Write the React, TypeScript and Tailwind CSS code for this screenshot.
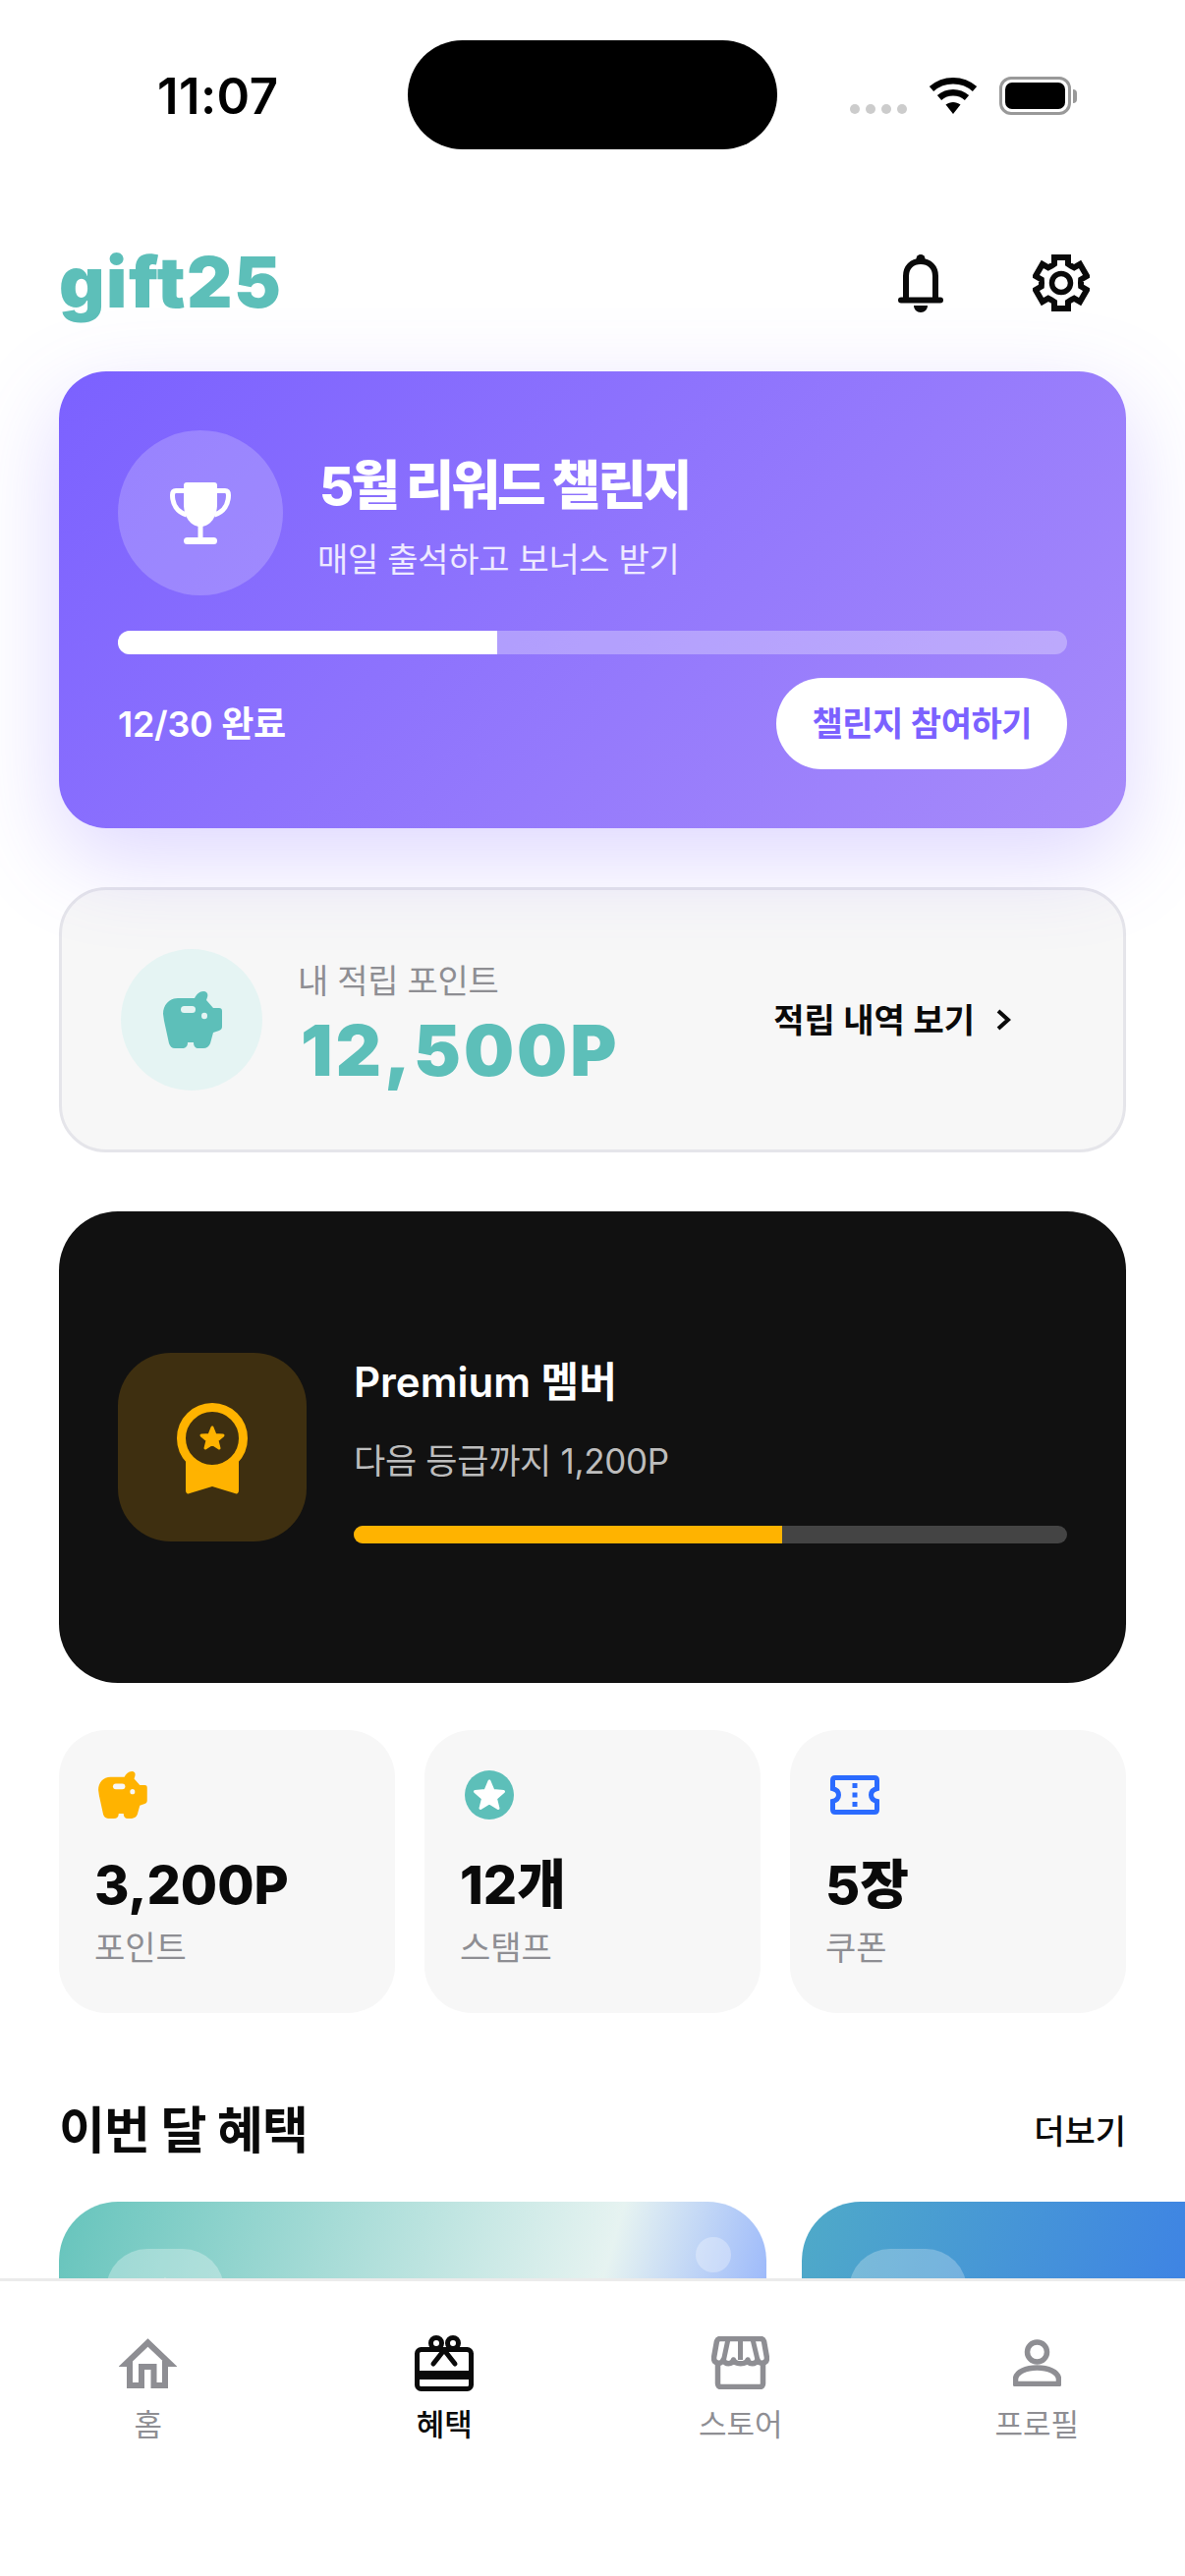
import React from 'react'

const font = { fontFamily: '"Inter", "Noto Sans CJK KR", sans-serif' }

// 6 tooth gear outline, drawn as one polygon
const gearPoints = Array.from({ length: 6 }, (_, i) => {
  const a = i * 60 - 90
  const pt = (r: number, d: number) => {
    const t = ((a + d) * Math.PI) / 180
    return `${(29 + r * Math.cos(t)).toFixed(2)},${(30 + r * Math.sin(t)).toFixed(2)}`
  }
  return [pt(20, -30), pt(20.5, -20), pt(27, -15), pt(27, 15), pt(20.5, 20)].join(' ')
}).join(' ')

const Piggy = ({ color, hole, className }: { color: string; hole: string; className: string }) => (
  <svg viewBox="0 0 61 58" className={className}>
    <path
      fill={color}
      d="M1 23C1 14 7 7 16 7H33C35 3 38 0 42 0C46 0 47 3 46 6L45 9L52 17H58C60 17 61 18 61 20V36C61 38 60 39 58 40L52 42L49 53C48 56 45 58 42 58H37C34 58 32 56 32 52H26C26 56 24 58 20 58H13C10 58 8 56 7 53L2 30Z"
    />
    <rect x="19" y="15" width="15" height="7" rx="3.5" fill={hole} />
    <ellipse cx="43" cy="25" rx="3" ry="3.2" fill={hole} />
  </svg>
)

const Bell = () => (
  <svg viewBox="0 0 46 59" className="w-[46px] h-[59px]">
    <circle cx="23" cy="4.5" r="4.5" fill="#0a0a0a" />
    <path d="M8 44V22C8 13 14 7 23 7C32 7 38 13 38 22V44" fill="none" stroke="#0a0a0a" strokeWidth="6" />
    <path d="M3 46.5H43" stroke="#0a0a0a" strokeWidth="6" strokeLinecap="round" />
    <path d="M16 52H30C30 56 27 59 23 59C19 59 16 56 16 52Z" fill="#0a0a0a" />
  </svg>
)

const Gear = () => (
  <svg viewBox="0 0 58 60" className="w-[58px] h-[60px]">
    <polygon points={gearPoints} fill="none" stroke="#0a0a0a" strokeWidth="6" strokeLinejoin="miter" />
    <circle cx="29" cy="30" r="9.5" fill="none" stroke="#0a0a0a" strokeWidth="5.5" />
  </svg>
)

const Trophy = () => (
  <svg viewBox="0 0 62 63" className="w-[62px] h-[63px]">
    <path d="M14 8.5H6C3.5 8.5 2.5 10 2.5 13C2.5 22 7 30 17 33" fill="none" stroke="#fff" strokeWidth="5" />
    <path d="M48 8.5H56C58.5 8.5 59.5 10 59.5 13C59.5 22 55 30 45 33" fill="none" stroke="#fff" strokeWidth="5" />
    <path fill="#fff" d="M17 0H45C47 0 48 1 48 3V22C48 35 41 45 31 45C21 45 14 35 14 22V3C14 1 15 0 17 0Z" />
    <rect x="28.5" y="44" width="5" height="14" fill="#fff" />
    <rect x="14" y="56" width="34" height="7" rx="3.5" fill="#fff" />
  </svg>
)

const Medal = () => (
  <svg viewBox="0 0 72 93" className="w-[72px] h-[93px] mt-[3px]">
    <path fill="#FFB300" d="M9 56H63V89C63 92 61 93 59 92L36 85L13 92C11 93 9 92 9 89Z" />
    <circle cx="36" cy="36" r="31.5" fill="#3E2F10" stroke="#FFB300" strokeWidth="9" />
    <path
      fill="#FFB300"
      stroke="#FFB300"
      strokeWidth="3"
      strokeLinejoin="round"
      d="M36 25L39 32.5L47 33L41 38L43 46L36 41.5L29 46L31 38L25 33L33 32.5Z"
    />
  </svg>
)

const StarCircle = () => (
  <svg viewBox="0 0 50 50" className="w-[50px] h-[50px]">
    <circle cx="25" cy="25" r="25" fill="#5DBFB9" />
    <path
      fill="#fff"
      stroke="#fff"
      strokeWidth="3"
      strokeLinejoin="round"
      d="M25 11L29 20.5L39.5 21.5L31.5 28.5L34 38.5L25 33L16 38.5L18.5 28.5L10.5 21.5L21 20.5Z"
    />
  </svg>
)

const Ticket = () => (
  <svg viewBox="0 0 50 40" className="w-[50px] h-[40px]">
    <path
      d="M5 2.5H45C46.5 2.5 47.5 3.5 47.5 5V13.5C44 14.500 41.500 17 41.500 20C41.500 23 44 25.500 47.5 26.500V35C47.5 36.5 46.5 37.5 45 37.5H5C3.500 37.5 2.5 36.5 2.5 35V26.500C6 25.500 8.500 23 8.500 20C8.500 17 6 14.500 2.5 13.500V5C2.5 3.5 3.5 2.5 5 2.5Z"
      fill="none"
      stroke="#2B6BFF"
      strokeWidth="5"
    />
    <rect x="22.500" y="8" width="5" height="5" fill="#2B6BFF" />
    <rect x="22.500" y="17.500" width="5" height="5" fill="#2B6BFF" />
    <rect x="22.500" y="27" width="5" height="5" fill="#2B6BFF" />
  </svg>
)

const HomeIcon = () => (
  <svg viewBox="0 0 59 51" className="w-[59px] h-[51px]">
    <path
      d="M23 48V29H35.500V48H47V26H52L29.500 4.500L7 26H11V48Z"
      fill="none"
      stroke="#8E8E93"
      strokeWidth="6"
    />
  </svg>
)

const GiftIcon = () => (
  <svg viewBox="0 0 60 57" className="w-[60px] h-[57px]">
    <rect x="2.500" y="14.500" width="55" height="40" rx="4" fill="none" stroke="#0a0a0a" strokeWidth="5" />
    <rect x="2" y="36" width="56" height="9" fill="#0a0a0a" />
    <circle cx="22" cy="8" r="5.500" fill="none" stroke="#0a0a0a" strokeWidth="5" />
    <circle cx="39" cy="8" r="5.500" fill="none" stroke="#0a0a0a" strokeWidth="5" />
    <path d="M30 15L19 29M30 15L41 29" stroke="#0a0a0a" strokeWidth="5" strokeLinecap="round" />
  </svg>
)

const StoreIcon = () => (
  <svg viewBox="0 0 59 54" className="w-[59px] h-[54px]">
    <path
      d="M9 2.500H50C52 2.500 53 3.500 53.500 5L56.500 22C56.500 28 48.500 29 47 24C45 29 38 29 37 24C35.500 29 24 29 22.500 24C21 29 14 29 12 24C10.500 29 2.500 28 2.500 22L5.500 5C6 3.500 7 2.500 9 2.500Z"
      fill="none"
      stroke="#8E8E93"
      strokeWidth="5.500"
      strokeLinejoin="round"
    />
    <path d="M17 3L12.500 24M29.500 3V24M42 3L47 24" stroke="#8E8E93" strokeWidth="5" fill="none" />
    <path d="M6.500 27V48C6.500 50 7.500 51.500 9.500 51.500H49.500C51.500 51.500 52.500 50 52.500 48V27" fill="none" stroke="#8E8E93" strokeWidth="5.500" />
  </svg>
)

const PersonIcon = () => (
  <svg viewBox="0 0 49 48" className="w-[49px] h-[48px]">
    <circle cx="24.500" cy="13" r="10" fill="none" stroke="#8E8E93" strokeWidth="5.500" />
    <path
      d="M2.500 45.500V41C2.500 33 14 29 24.500 29C35 29 46.500 33 46.500 41V45.500Z"
      fill="none"
      stroke="#8E8E93"
      strokeWidth="5.500"
      strokeLinejoin="round"
    />
  </svg>
)

const StatCard = ({ icon, value, label, pad }: { icon: React.ReactNode; value: string; label: string; pad: string }) => (
  <div className="flex-1 h-[288px] rounded-[48px] bg-[#F7F7F7] px-[36px]">
    <div className={`h-[60px] mt-[36px] flex items-center ${pad}`}>{icon}</div>
    <div className="mt-[26px] text-[54px] leading-[72px] font-extrabold text-[#0a0a0a]">{value}</div>
    <div className="mt-[4px] text-[34px] leading-[48px] text-[#8E8E93]">{label}</div>
  </div>
)

const NavItem = ({ icon, label, active }: { icon: React.ReactNode; label: string; active?: boolean }) => (
  <div className="flex-1 flex flex-col items-center">
    <div className="h-[60px] flex items-center justify-center">{icon}</div>
    <div className={`mt-[9px] text-[31px] leading-[48px] ${active ? 'text-[#0a0a0a] font-medium' : 'text-[#8E8E93]'}`}>{label}</div>
  </div>
)

export default function App() {
  return (
    <div style={font} className="w-[1206px] h-[2622px] bg-white flex flex-col overflow-hidden">
      {/* status bar */}
      <div className="h-[162px] shrink-0 grid grid-cols-[1fr_376px_1fr] items-start pt-[41px]">
        <div className="pl-[160px] mt-[27px] text-[51px] leading-[60px] font-semibold tracking-[0.4px] text-black">11:07</div>
        <div className="h-[111px] rounded-full bg-black"></div>
        <div className="flex items-end pl-[74px] mt-[37px] h-[39px]">
          <div className="flex gap-[6px] mb-[1px] mr-[22px]">
            <div className="w-[10px] h-[10px] rounded-full bg-[#ccc]"></div>
            <div className="w-[10px] h-[10px] rounded-full bg-[#ccc]"></div>
            <div className="w-[10px] h-[10px] rounded-full bg-[#ccc]"></div>
            <div className="w-[10px] h-[10px] rounded-full bg-[#ccc]"></div>
          </div>
          <svg viewBox="0 0 50 38" className="w-[50px] h-[38px] mr-[22px]">
            <path d="M25 37L17.500 27.500C22 24 28 24 32.500 27.500Z" fill="#000" />
            <path d="M11 20.500C19 13.500 31 13.500 39 20.500" fill="none" stroke="#000" strokeWidth="6.500" />
            <path d="M3 11.500C15.500 0.500 34.500 0.500 47 11.500" fill="none" stroke="#000" strokeWidth="6.500" />
          </svg>
          <div className="flex items-center gap-[2px]">
            <div className="w-[73px] h-[39px] rounded-[12px] border-[3px] border-[#999] p-[3px]">
              <div className="w-full h-full rounded-[7px] bg-black"></div>
            </div>
            <div className="w-[4px] h-[14px] rounded-r-full bg-[#999]"></div>
          </div>
        </div>
      </div>

      <div className="flex-1 min-h-0 overflow-hidden px-[60px]">
        {/* header */}
        <div className="h-[216px] flex items-start justify-between pr-[37px] pt-[84px]">
          <div className="text-[72px] leading-[84px] font-black tracking-[1.5px] text-[#5DBFB9] -mt-[1px]">gift25</div>
          <div className="flex items-center gap-[91px] h-[60px] mt-[12px]">
            <Bell />
            <Gear />
          </div>
        </div>

        {/* challenge card */}
        <div className="relative z-10 h-[465px] rounded-[48px] p-[60px] bg-[linear-gradient(135deg,#7B61FF,#A78BFA)] shadow-[0_30px_90px_rgba(123,97,255,0.25)]">
          <div className="flex items-center gap-[37px]">
            <div className="w-[168px] h-[168px] rounded-full bg-white/20 flex items-center justify-center">
              <Trophy />
            </div>
            <div className="pt-[12px]">
              <div className="text-[54px] leading-[66px] font-extrabold tracking-[-3px] text-white">5월 리워드 챌린지</div>
              <div className="mt-[18px] -ml-[2px] text-[34px] leading-[48px] tracking-[-0.3px] text-white/85">매일 출석하고 보너스 받기</div>
            </div>
          </div>
          <div className="mt-[36px] h-[24px] rounded-full bg-white/30 overflow-hidden">
            <div className="w-[40%] h-full bg-white"></div>
          </div>
          <div className="mt-[24px] flex items-center justify-between">
            <div className="text-[36px] leading-[48px] font-semibold tracking-[-0.3px] text-white">12/30 완료</div>
            <div className="h-[93px] px-[36px] rounded-full bg-white flex items-center text-[34px] font-semibold tracking-[-0.5px] text-[#7B61FF]">챌린지 참여하기</div>
          </div>
        </div>

        {/* point card */}
        <div className="mt-[60px] h-[270px] rounded-[48px] border-[3px] border-[#E5E5EA] bg-[#F7F7F7] pl-[60px] pr-[114px] flex items-center">
          <div className="w-[144px] h-[144px] rounded-full bg-[#E5F4F3] flex items-center justify-center">
            <Piggy color="#5DBFB9" hole="#E5F4F3" className="w-[61px] h-[58px]" />
          </div>
          <div className="ml-[36px] flex-1 pt-[10px]">
            <div className="text-[34px] leading-[48px] tracking-[-0.3px] text-[#8E8E93]">내 적립 포인트</div>
            <div className="mt-[4px] pl-[3px] text-[72px] leading-[84px] font-black tracking-[3px] text-[#5DBFB9]">12,500P</div>
          </div>
          <div className="flex items-center gap-[22px] text-[34px] font-semibold text-[#0a0a0a]">
            적립 내역 보기
            <svg viewBox="0 0 15 22" className="w-[15px] h-[22px]">
              <path d="M2 2L12 11L2 20" fill="none" stroke="#0a0a0a" strokeWidth="4" />
            </svg>
          </div>
        </div>

        {/* member card */}
        <div className="mt-[60px] h-[480px] rounded-[60px] bg-[#111] px-[60px] flex items-center gap-[48px]">
          <div className="w-[192px] h-[192px] shrink-0 rounded-[54px] bg-[#3E2F10] flex items-center justify-center">
            <Medal />
          </div>
          <div className="flex-1 mt-[4px]">
            <div className="text-[42px] leading-[54px] font-semibold text-white">Premium 멤버</div>
            <div className="mt-[29px] text-[35px] leading-[48px] tracking-[-0.3px] text-[#BDBDBD]">다음 등급까지 1,200P</div>
            <div className="mt-[42px] h-[18px] rounded-full bg-[#444] overflow-hidden">
              <div className="w-[60%] h-full bg-[#FFB300]"></div>
            </div>
          </div>
        </div>

        {/* stats */}
        <div className="mt-[48px] flex gap-[30px]">
          <StatCard icon={<Piggy color="#FFB300" hole="#F7F7F7" className="w-[51px] h-[48px]" />} value="3,200P" label="포인트" pad="pl-[3px]" />
          <StatCard icon={<StarCircle />} value="12개" label="스탬프" pad="pl-[5px]" />
          <StatCard icon={<Ticket />} value="5장" label="쿠폰" pad="pl-[5px]" />
        </div>

        {/* benefits */}
        <div className="mt-[84px] flex items-center justify-between">
          <div className="text-[51px] leading-[72px] font-bold tracking-[-0.8px] text-[#0a0a0a]">이번 달 혜택</div>
          <div className="text-[34px] font-medium text-[#0a0a0a]">더보기</div>
        </div>
        <div className="mt-[36px] flex gap-[36px] w-[1600px]">
          <div className="relative w-[720px] h-[360px] rounded-[60px] p-[48px] bg-[linear-gradient(106deg,#66C4BC_0%,#E6F3F1_70%,#7B9FFF_100%)]">
            <div className="w-[120px] h-[120px] rounded-[42px] bg-white/30 flex justify-center pt-[29px]">
              <svg viewBox="0 0 60 60" className="w-[60px] h-[60px]">
                <path fill="#fff" d="M30 0L38 22L60 23L43 37L49 60L30 47L11 60L17 37L0 23L22 22Z" />
              </svg>
            </div>
            <div className="absolute top-[36px] right-[36px] w-[36px] h-[36px] rounded-full bg-white/30"></div>
          </div>
          <div className="relative w-[720px] h-[360px] rounded-[60px] p-[48px] bg-[linear-gradient(106deg,#4FAAC8,#2E5EFF)]">
            <div className="w-[120px] h-[120px] rounded-[42px] bg-white/25"></div>
          </div>
        </div>
      </div>

      {/* bottom nav */}
      <div className="relative z-20 h-[303px] shrink-0 bg-white border-t-[3px] border-[#EBEBEB] flex items-start pt-[53px]">
        <NavItem icon={<HomeIcon />} label="홈" />
        <NavItem icon={<GiftIcon />} label="혜택" active />
        <NavItem icon={<StoreIcon />} label="스토어" />
        <NavItem icon={<PersonIcon />} label="프로필" />
      </div>
    </div>
  )
}
